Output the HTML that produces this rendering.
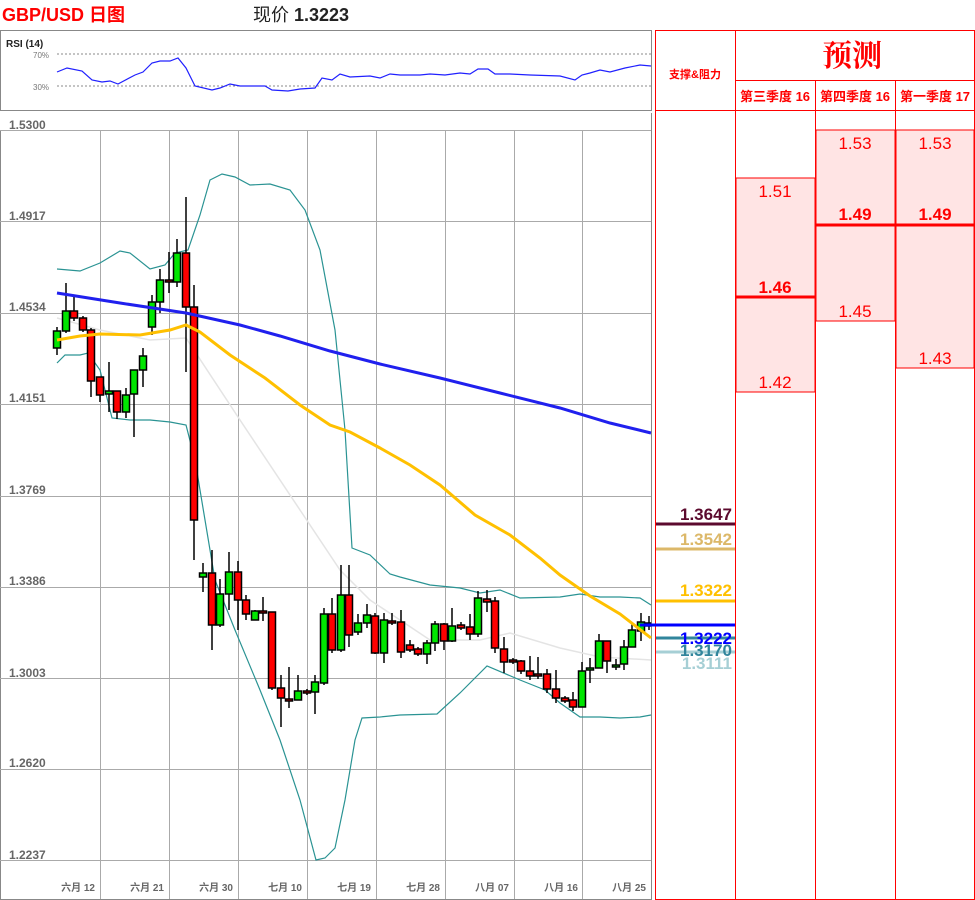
<!DOCTYPE html>
<html><head><meta charset="utf-8"><style>
body{margin:0;width:975px;height:900px;background:#fff;overflow:hidden;font-family:"Liberation Sans","Noto Sans CJK SC",sans-serif}
svg{position:absolute;left:0;top:0}
</style></head><body>
<svg width="975" height="900" xmlns="http://www.w3.org/2000/svg" font-family="Liberation Sans, Noto Sans CJK SC, sans-serif">
<text x="2" y="21" font-size="18" font-weight="bold" fill="#ff0000">GBP/USD 日图</text>
<text x="253" y="21" font-size="18" fill="#222">现价 <tspan font-weight="bold">1.3223</tspan></text>
<rect x="0.5" y="30.5" width="651" height="80" fill="#fff" stroke="#888"/>
<text x="6" y="47" font-size="10" font-weight="bold" fill="#222">RSI (14)</text>
<line x1="57" y1="54" x2="651" y2="54" stroke="#888" stroke-dasharray="2,2"/>
<line x1="57" y1="86" x2="651" y2="86" stroke="#888" stroke-dasharray="2,2"/>
<text x="33" y="58" font-size="8" fill="#777">70%</text>
<text x="33" y="90" font-size="8" fill="#777">30%</text>
<polyline fill="none" stroke="#2020ff" stroke-width="1.2" points="57,72 67,68 82,71 92,80 102,82 110,81 118,84 135,75 143,72 152,63 160,61 170,61 178,58 186,68 195,86 212,90 220,88 230,84 240,86 265,86 272,90 288,91 300,89 315,88 322,78 332,80 340,74 350,77 370,76 380,78 390,74 400,75 420,75 430,74 445,75 460,73 470,74 478,69 488,69 495,74 510,74 530,75 560,76 575,80 582,75 590,73 600,70 610,72 625,68 640,65 651,66"/>
<line x1="0.5" y1="130" x2="0.5" y2="899" stroke="#888"/>
<line x1="651.5" y1="113" x2="651.5" y2="899" stroke="#888"/>
<line x1="0" y1="899.5" x2="652" y2="899.5" stroke="#888"/>
<g stroke="#aaa" stroke-width="1">
<line x1="0" y1="130.5" x2="651" y2="130.5"/><line x1="0" y1="221.5" x2="651" y2="221.5"/><line x1="0" y1="313.5" x2="651" y2="313.5"/><line x1="0" y1="404.5" x2="651" y2="404.5"/><line x1="0" y1="496.5" x2="651" y2="496.5"/><line x1="0" y1="587.5" x2="651" y2="587.5"/><line x1="0" y1="678.5" x2="651" y2="678.5"/><line x1="0" y1="769.5" x2="651" y2="769.5"/><line x1="0" y1="860.5" x2="651" y2="860.5"/>
<line x1="100.5" y1="130" x2="100.5" y2="899"/><line x1="169.5" y1="130" x2="169.5" y2="899"/><line x1="238.5" y1="130" x2="238.5" y2="899"/><line x1="307.5" y1="130" x2="307.5" y2="899"/><line x1="376.5" y1="130" x2="376.5" y2="899"/><line x1="445.5" y1="130" x2="445.5" y2="899"/><line x1="514.5" y1="130" x2="514.5" y2="899"/><line x1="582.5" y1="130" x2="582.5" y2="899"/>
</g>
<g font-size="12" font-weight="bold" fill="#666">
<text x="9" y="129">1.5300</text><text x="9" y="220">1.4917</text><text x="9" y="311">1.4534</text><text x="9" y="402">1.4151</text><text x="9" y="494">1.3769</text><text x="9" y="585">1.3386</text><text x="9" y="677">1.3003</text><text x="9" y="767">1.2620</text><text x="9" y="859">1.2237</text>
</g>
<g font-size="10" font-weight="bold" fill="#666" text-anchor="end">
<text x="95" y="891">六月 12</text><text x="164" y="891">六月 21</text><text x="233" y="891">六月 30</text><text x="302" y="891">七月 10</text><text x="371" y="891">七月 19</text><text x="440" y="891">七月 28</text><text x="509" y="891">八月 07</text><text x="578" y="891">八月 16</text><text x="646" y="891">八月 25</text>
</g>
<polyline fill="none" stroke="#e4e4e4" stroke-width="1.5" points="57,318 100,330 150,340 186,338 240,420 300,510 340,570 370,600 430,640 480,640 510,633 560,648 600,657 651,660"/>
<g fill="none" stroke="#2a9393" stroke-width="1.2">
<polyline points="57,269 80,271 100,263 120,251 130,253 150,269 165,265 175,253 188,250 200,215 210,180 222,174 235,177 250,185 270,184 290,190 305,210 320,250 335,330 345,430 352,548 370,555 390,574 400,577 430,585 460,588 480,593 500,590 520,598 560,597 580,594 600,597 620,597 640,598 651,605"/>
<polyline points="57,363 65,355 80,355 88,353 100,370 112,418 130,420 150,420 170,422 186,425 195,460 205,520 215,580 235,630 260,690 280,740 300,800 316,860 325,858 335,848 345,800 355,740 362,718 380,717 400,715 437,714 460,693 487,666 520,680 545,690 560,703 580,717 600,717 620,718 640,717 651,715"/>
</g>
<g stroke="#000" stroke-width="1.5">
<line x1="57" y1="327" x2="57" y2="355"/><rect x="53.5" y="331" width="7" height="17" fill="#00e600"/>
<line x1="66" y1="283" x2="66" y2="333"/><rect x="62.5" y="311" width="7" height="20" fill="#00e600"/>
<line x1="74" y1="297" x2="74" y2="321"/><rect x="70.5" y="311" width="7" height="7" fill="#f00"/>
<line x1="83" y1="316" x2="83" y2="332"/><rect x="79.5" y="318" width="7" height="12" fill="#f00"/>
<line x1="91" y1="328" x2="91" y2="397"/><rect x="87.5" y="330" width="7" height="51" fill="#f00"/>
<line x1="100" y1="377" x2="100" y2="402"/><rect x="96.5" y="377" width="7" height="18" fill="#f00"/>
<line x1="109" y1="362" x2="109" y2="412"/><rect x="105.5" y="391" width="7" height="3" fill="#00e600"/>
<line x1="117" y1="391" x2="117" y2="419"/><rect x="113.5" y="391" width="7" height="21" fill="#f00"/>
<line x1="126" y1="388" x2="126" y2="418"/><rect x="122.5" y="395" width="7" height="17" fill="#00e600"/>
<line x1="134" y1="370" x2="134" y2="437"/><rect x="130.5" y="370" width="7" height="24" fill="#00e600"/>
<line x1="143" y1="348" x2="143" y2="387"/><rect x="139.5" y="356" width="7" height="14" fill="#00e600"/>
<line x1="152" y1="295" x2="152" y2="335"/><rect x="148.5" y="302" width="7" height="25" fill="#00e600"/>
<line x1="160" y1="269" x2="160" y2="313"/><rect x="156.5" y="280" width="7" height="22" fill="#00e600"/>
<line x1="169" y1="252" x2="169" y2="293"/><rect x="165.5" y="280" width="7" height="2" fill="#f00"/>
<line x1="177" y1="239" x2="177" y2="287"/><rect x="173.5" y="253" width="7" height="29" fill="#00e600"/>
<line x1="186" y1="197" x2="186" y2="372"/><rect x="182.5" y="253" width="7" height="54" fill="#f00"/>
<line x1="194" y1="285" x2="194" y2="560"/><rect x="190.5" y="307" width="7" height="213" fill="#f00"/>
<line x1="203" y1="563" x2="203" y2="592"/><rect x="199.5" y="573" width="7" height="4" fill="#00e600"/>
<line x1="212" y1="550" x2="212" y2="650"/><rect x="208.5" y="573" width="7" height="52" fill="#f00"/>
<line x1="220" y1="579" x2="220" y2="627"/><rect x="216.5" y="594" width="7" height="31" fill="#00e600"/>
<line x1="229" y1="552" x2="229" y2="610"/><rect x="225.5" y="572" width="7" height="22" fill="#00e600"/>
<line x1="238" y1="561" x2="238" y2="630"/><rect x="234.5" y="572" width="7" height="28" fill="#f00"/>
<line x1="246" y1="595" x2="246" y2="620"/><rect x="242.5" y="600" width="7" height="14" fill="#f00"/>
<line x1="255" y1="610" x2="255" y2="620"/><rect x="251.5" y="611" width="7" height="9" fill="#00e600"/>
<line x1="263" y1="597" x2="263" y2="621"/><rect x="259.5" y="611" width="7" height="2" fill="#f00"/>
<line x1="272" y1="612" x2="272" y2="690"/><rect x="268.5" y="612" width="7" height="76" fill="#f00"/>
<line x1="281" y1="675" x2="281" y2="727"/><rect x="277.5" y="688" width="7" height="10" fill="#f00"/>
<line x1="289" y1="667" x2="289" y2="708"/><rect x="285.5" y="699" width="7" height="2" fill="#f00"/>
<line x1="298" y1="675" x2="298" y2="700"/><rect x="294.5" y="691" width="7" height="9" fill="#00e600"/>
<line x1="307" y1="689" x2="307" y2="695"/><rect x="303.5" y="691" width="7" height="2" fill="#f00"/>
<line x1="315" y1="675" x2="315" y2="714"/><rect x="311.5" y="682" width="7" height="10" fill="#00e600"/>
<line x1="324" y1="608" x2="324" y2="685"/><rect x="320.5" y="614" width="7" height="69" fill="#00e600"/>
<line x1="332" y1="598" x2="332" y2="653"/><rect x="328.5" y="614" width="7" height="36" fill="#f00"/>
<line x1="341" y1="565" x2="341" y2="652"/><rect x="337.5" y="595" width="7" height="55" fill="#00e600"/>
<line x1="349" y1="565" x2="349" y2="647"/><rect x="345.5" y="595" width="7" height="40" fill="#f00"/>
<line x1="358" y1="614" x2="358" y2="635"/><rect x="354.5" y="623" width="7" height="9" fill="#00e600"/>
<line x1="367" y1="604" x2="367" y2="628"/><rect x="363.5" y="615" width="7" height="8" fill="#00e600"/>
<line x1="375" y1="613" x2="375" y2="654"/><rect x="371.5" y="616" width="7" height="37" fill="#f00"/>
<line x1="384" y1="613" x2="384" y2="663"/><rect x="380.5" y="620" width="7" height="33" fill="#00e600"/>
<line x1="392" y1="613" x2="392" y2="625"/><rect x="388.5" y="621" width="7" height="2" fill="#f00"/>
<line x1="401" y1="610" x2="401" y2="658"/><rect x="397.5" y="622" width="7" height="30" fill="#f00"/>
<line x1="410" y1="640" x2="410" y2="652"/><rect x="406.5" y="645" width="7" height="5" fill="#f00"/>
<line x1="418" y1="647" x2="418" y2="656"/><rect x="414.5" y="649" width="7" height="5" fill="#f00"/>
<line x1="427" y1="640" x2="427" y2="664"/><rect x="423.5" y="643" width="7" height="11" fill="#00e600"/>
<line x1="435" y1="621" x2="435" y2="651"/><rect x="431.5" y="624" width="7" height="19" fill="#00e600"/>
<line x1="444" y1="623" x2="444" y2="650"/><rect x="440.5" y="624" width="7" height="17" fill="#f00"/>
<line x1="452" y1="608" x2="452" y2="642"/><rect x="448.5" y="626" width="7" height="15" fill="#00e600"/>
<line x1="461" y1="622" x2="461" y2="630"/><rect x="457.5" y="625" width="7" height="3" fill="#f00"/>
<line x1="470" y1="614" x2="470" y2="640"/><rect x="466.5" y="627" width="7" height="7" fill="#f00"/>
<line x1="478" y1="591" x2="478" y2="637"/><rect x="474.5" y="598" width="7" height="36" fill="#00e600"/>
<line x1="487" y1="590" x2="487" y2="612"/><rect x="483.5" y="599" width="7" height="3" fill="#f00"/>
<line x1="495" y1="597" x2="495" y2="653"/><rect x="491.5" y="601" width="7" height="47" fill="#f00"/>
<line x1="504" y1="637" x2="504" y2="673"/><rect x="500.5" y="649" width="7" height="13" fill="#f00"/>
<line x1="513" y1="658" x2="513" y2="664"/><rect x="509.5" y="660" width="7" height="2" fill="#f00"/>
<line x1="521" y1="660" x2="521" y2="674"/><rect x="517.5" y="661" width="7" height="10" fill="#f00"/>
<line x1="530" y1="656" x2="530" y2="680"/><rect x="526.5" y="671" width="7" height="5" fill="#f00"/>
<line x1="538" y1="657" x2="538" y2="679"/><rect x="534.5" y="674" width="7" height="2" fill="#f00"/>
<line x1="547" y1="669" x2="547" y2="693"/><rect x="543.5" y="674" width="7" height="15" fill="#f00"/>
<line x1="556" y1="670" x2="556" y2="703"/><rect x="552.5" y="689" width="7" height="9" fill="#f00"/>
<line x1="565" y1="696" x2="565" y2="703"/><rect x="561.5" y="698" width="7" height="3" fill="#f00"/>
<line x1="573" y1="692" x2="573" y2="711"/><rect x="569.5" y="700" width="7" height="7" fill="#f00"/>
<line x1="582" y1="662" x2="582" y2="707"/><rect x="578.5" y="671" width="7" height="36" fill="#00e600"/>
<line x1="590" y1="658" x2="590" y2="683"/><rect x="586.5" y="668" width="7" height="2" fill="#00e600"/>
<line x1="599" y1="634" x2="599" y2="668"/><rect x="595.5" y="641" width="7" height="27" fill="#00e600"/>
<line x1="607" y1="641" x2="607" y2="673"/><rect x="603.5" y="641" width="7" height="20" fill="#f00"/>
<line x1="616" y1="659" x2="616" y2="670"/><rect x="612.5" y="665" width="7" height="2" fill="#00e600"/>
<line x1="624" y1="640" x2="624" y2="670"/><rect x="620.5" y="647" width="7" height="17" fill="#00e600"/>
<line x1="632" y1="624" x2="632" y2="647"/><rect x="628.5" y="630" width="7" height="17" fill="#00e600"/>
<line x1="641" y1="613" x2="641" y2="641"/><rect x="637.5" y="622" width="7" height="9" fill="#00e600"/>
<line x1="649" y1="616" x2="649" y2="630"/><rect x="645.5" y="623" width="5" height="3" fill="#f00"/>
</g>
<polyline fill="none" stroke="#ffc000" stroke-width="3" points="57,340 80,336 100,334 140,335 170,330 186,325 200,332 230,355 265,378 300,405 330,425 350,432 380,448 410,465 440,485 475,515 510,535 540,558 560,575 590,596 620,614 651,638"/>
<polyline fill="none" stroke="#2020ee" stroke-width="3" points="57,293 120,303 186,313 240,325 280,336 330,351 380,364 440,378 500,393 560,408 610,423 651,433"/>
<g stroke="#ff0000" stroke-width="1" fill="none">
<rect x="655.5" y="30.5" width="319" height="869"/>
<line x1="735.5" y1="30" x2="735.5" y2="900"/>
<line x1="815.5" y1="80" x2="815.5" y2="900"/>
<line x1="895.5" y1="80" x2="895.5" y2="900"/>
<line x1="735" y1="80.5" x2="975" y2="80.5"/>
<line x1="655" y1="110.5" x2="975" y2="110.5"/>
</g>
<rect x="736" y="178" width="79" height="214" fill="#ffe4e4" stroke="#f00"/>
<rect x="816" y="130" width="79" height="191" fill="#ffe4e4" stroke="#f00"/>
<rect x="896" y="130" width="78" height="238" fill="#ffe4e4" stroke="#f00"/>
<line x1="736" y1="297" x2="815" y2="297" stroke="#f00" stroke-width="3"/>
<line x1="816" y1="225" x2="975" y2="225" stroke="#f00" stroke-width="3"/>
<g fill="#ff0000" text-anchor="middle">
<text x="695" y="78" font-size="11" font-weight="bold">支撑&amp;阻力</text>
<text x="852" y="66" font-size="30" font-weight="bold" font-family="Noto Serif CJK SC, serif">预测</text>
<text x="775" y="101" font-size="13" font-weight="bold">第三季度 16</text>
<text x="855" y="101" font-size="13" font-weight="bold">第四季度 16</text>
<text x="935" y="101" font-size="13" font-weight="bold">第一季度 17</text>
<g font-size="17"><text x="775" y="197">1.51</text><text x="775" y="388">1.42</text><text x="855" y="149">1.53</text><text x="855" y="317">1.45</text><text x="935" y="149">1.53</text><text x="935" y="364">1.43</text></g>
<g font-size="17" font-weight="bold"><text x="775" y="293">1.46</text><text x="855" y="220">1.49</text><text x="935" y="220">1.49</text></g>
</g>
<g stroke-width="3">
<line x1="656" y1="524" x2="735" y2="524" stroke="#5c0a2e"/>
<line x1="656" y1="549" x2="735" y2="549" stroke="#dcb869"/>
<line x1="656" y1="601" x2="735" y2="601" stroke="#ffc000"/>
<line x1="640" y1="625" x2="735" y2="625" stroke="#0000ff"/>
<line x1="656" y1="638" x2="735" y2="638" stroke="#31859c"/>
<line x1="656" y1="652" x2="735" y2="652" stroke="#a6cfd5"/>
</g>
<g font-size="17" font-weight="bold" text-anchor="end">
<text x="732" y="520" fill="#5c0a2e">1.3647</text>
<text x="732" y="545" fill="#dcb869">1.3542</text>
<text x="732" y="596" fill="#ffc000">1.3322</text>
<text x="732" y="644" fill="#0000ff">1.3222</text>
<text x="732" y="656" fill="#31859c">1.3170</text>
<text x="732" y="669" fill="#a6cfd5">1.3111</text>
</g>
</svg>
</body></html>
